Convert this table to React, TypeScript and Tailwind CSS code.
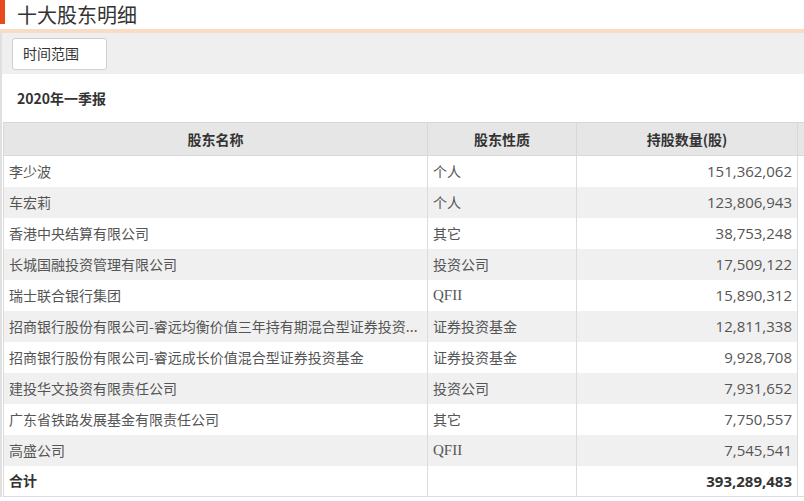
import React from "react";

const rows: [string, string, string][] = [
  ["李少波", "个人", "151,362,062"],
  ["车宏莉", "个人", "123,806,943"],
  ["香港中央结算有限公司", "其它", "38,753,248"],
  ["长城国融投资管理有限公司", "投资公司", "17,509,122"],
  ["瑞士联合银行集团", "QFII", "15,890,312"],
  ["招商银行股份有限公司-睿远均衡价值三年持有期混合型证券投资...", "证券投资基金", "12,811,338"],
  ["招商银行股份有限公司-睿远成长价值混合型证券投资基金", "证券投资基金", "9,928,708"],
  ["建投华文投资有限责任公司", "投资公司", "7,931,652"],
  ["广东省铁路发展基金有限责任公司", "其它", "7,750,557"],
  ["高盛公司", "QFII", "7,545,541"],
];

const font = { fontFamily: '"Noto Sans CJK SC", "Noto Sans", sans-serif' };
const num = { fontFamily: '"Open Sans", sans-serif' };

export default function App() {
  return (
    <div className="w-[804px] h-[501px] overflow-hidden bg-white" style={font}>
      <div className="flex items-start h-[29px]">
        <div className="w-[5px] h-[24px] bg-[#e8491d]" />
        <div className="ml-[12px] text-[20px] leading-[30px] text-[#333]">十大股东明细</div>
      </div>
      <div className="h-[4px] bg-[#f9dcc6]" />
      <div className="border-l-2 border-[#e0e0e0]">
        <div className="h-[41px] bg-[#efefef] flex items-center pl-[10px]">
          <div className="w-[95px] h-[32px] bg-white border border-[#cfcfcf] rounded-[3px] flex items-center pl-[10px] text-[14px] text-[#333]">
            时间范围
          </div>
        </div>
        <div className="h-[48px] flex items-center pl-[15px] text-[14px] font-bold text-[#333]">
          2020年一季报
        </div>
        <table className="w-[900px] border-collapse text-[14px] text-[#555] ml-[1px] table-fixed">
          <colgroup>
            <col className="w-[424px]" />
            <col className="w-[149px]" />
            <col className="w-[221px]" />
            <col />
          </colgroup>
          <thead>
            <tr className="h-[33px] bg-[#e6e6e6] text-[14px] font-bold text-[#333]">
              <th className="border border-[#d8d8d8] font-bold">股东名称</th>
              <th className="border border-[#d8d8d8] font-bold">股东性质</th>
              <th className="border border-[#d8d8d8] font-bold">持股数量(股)</th>
              <th className="border border-[#d8d8d8]"></th>
            </tr>
          </thead>
          <tbody>
            {rows.map((r, i) => (
              <tr key={i} className={i % 2 === 1 ? "h-[31px] bg-[#f0f0f0]" : "h-[31px] bg-white"}>
                <td className="border-x border-[#dcdcdc] pl-[5px] whitespace-nowrap overflow-hidden">{r[0]}</td>
                <td
                  className="border-x border-[#dcdcdc] pl-[5px] whitespace-nowrap"
                  style={r[1] === "QFII" ? { fontFamily: '"Liberation Serif", serif', fontSize: 15 } : undefined}
                >
                  {r[1]}
                </td>
                <td className="border-x border-[#dcdcdc] pr-[5px] text-right whitespace-nowrap text-[15px]" style={num}>{r[2]}</td>
                <td className="border-x border-[#dcdcdc] bg-white"></td>
              </tr>
            ))}
            <tr className="h-[31px] bg-white font-bold text-[#333]">
              <td className="border-x border-b border-[#dcdcdc] pl-[5px]">合计</td>
              <td className="border-x border-b border-[#dcdcdc]"></td>
              <td className="border-x border-b border-[#dcdcdc] pr-[5px] text-right text-[15px]" style={num}>393,289,483</td>
              <td className="border-x border-b border-[#dcdcdc]"></td>
            </tr>
          </tbody>
        </table>
      </div>
    </div>
  );
}
